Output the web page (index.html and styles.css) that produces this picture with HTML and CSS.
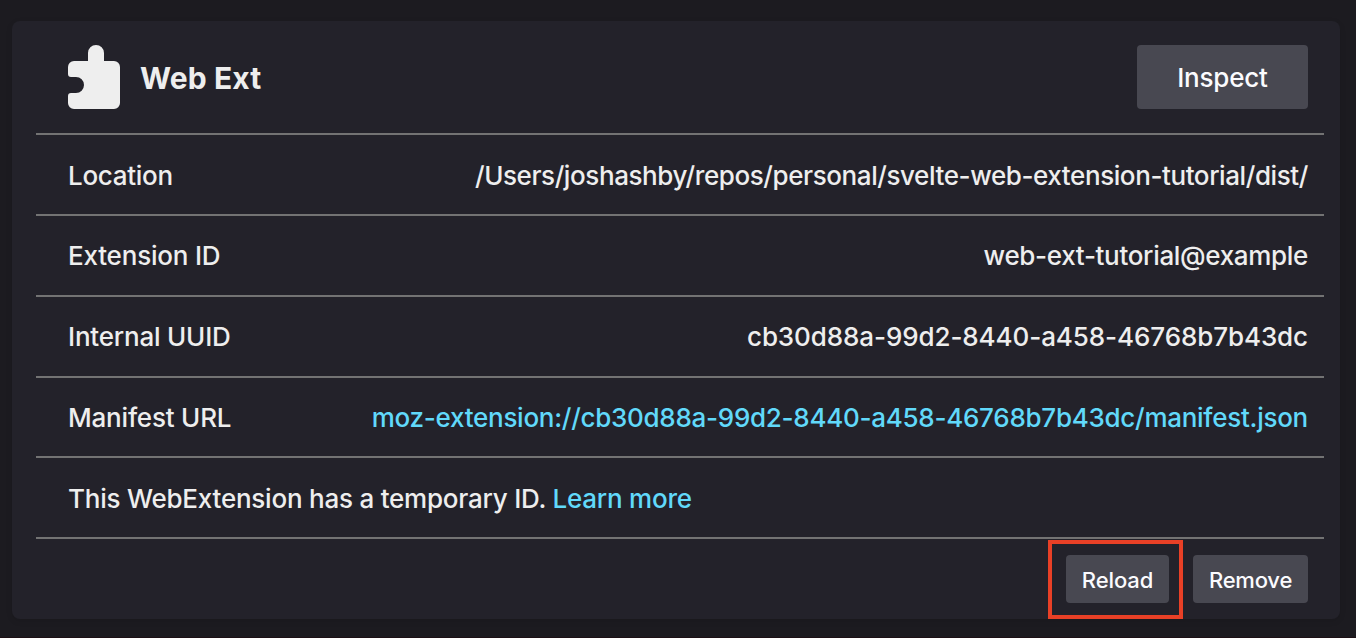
FILE: index.html
```html
<!DOCTYPE html>
<html lang="en">
<head>
<meta charset="utf-8">
<title>Web Ext</title>
<link rel="stylesheet" href="styles.css">
</head>
<body>
<article class="card">
  <header class="card-header">
    <svg class="icon" viewBox="0 0 52 64" width="52" height="64"><path fill="#eeeeee" d="M6 16H20V8a8 8 0 0 1 16 0v8H46a6 6 0 0 1 6 6V58a6 6 0 0 1-6 6H6a6 6 0 0 1-6-6V51a3 3 0 0 1 3-3H8a8 8 0 0 0 0-16H3a3 3 0 0 1-3-3V22a6 6 0 0 1 6-6Z"/></svg>
    <h1 class="title">Web Ext</h1>
    <button class="btn btn-large">Inspect</button>
  </header>
  <dl class="rows">
    <div class="row row-location"><dt>Location</dt><dd class="path">/Users/joshashby/repos/personal/svelte-web-extension-tutorial/dist/</dd></div>
    <div class="row"><dt>Extension ID</dt><dd class="extension-id">web-ext-tutorial@example</dd></div>
    <div class="row"><dt>Internal UUID</dt><dd class="uuid">cb30d88a-99d2-8440-a458-46768b7b43dc</dd></div>
    <div class="row row-manifest"><dt>Manifest URL</dt><dd class="manifest"><a class="link">moz-extension://cb30d88a-99d2-8440-a458-46768b7b43dc/manifest.json</a></dd></div>
  </dl>
  <p class="row note"><span>This WebExtension has a temporary ID. <a class="link">Learn more</a></span></p>
  <footer class="actions">
    <div class="highlight"><button class="btn btn-reload">Reload</button></div>
    <button class="btn btn-remove">Remove</button>
  </footer>
</article>
</body>
</html>
```
FILE: styles.css
```css
* { box-sizing: border-box; }
body { margin: 0; height: 638px; overflow: hidden; padding: 21px 16px 0 12px; border-bottom: 1px solid #1d1015; background: #1c1b20; color: #eeeeee; font: 450 26px/32px Inter, sans-serif; }
.card { height: 598px; padding: 0 16px 0 24px; background: #23222a; border-radius: 8px; box-shadow: 0 2px 6px rgba(12, 12, 13, 0.1); }
.card-header { display: flex; align-items: center; height: 114px; padding: 0 16px 0 32px; border-bottom: 2px solid #737373; }
.icon { flex: none; margin-right: 20px; }
.title { margin: 0; padding-top: 2px; font-size: 30px; font-weight: 700; line-height: 40px; letter-spacing: 0.1px; }
.btn { height: 48px; padding: 0; border: 0; border-radius: 4px; background: #484851; color: #fbfbfe; font: 500 22px/50px Inter, sans-serif; letter-spacing: -0.1px; white-space: nowrap; }
.btn-large { width: 171px; height: 64px; margin-left: auto; font-size: 26px; line-height: 66px; letter-spacing: -0.2px; }
.btn-reload { display: block; width: 103px; }
.btn-remove { width: 115px; letter-spacing: -0.2px; }
.rows { margin: 0; }
.row { display: flex; justify-content: space-between; align-items: center; height: 81px; margin: 0; padding: 1px 16px 0 32px; border-bottom: 2px solid #737373; letter-spacing: -0.2px; white-space: nowrap; }
.row-location { padding-top: 3px; letter-spacing: -0.3px; }
.row-manifest { height: 80px; }
.note { padding-top: 3px; letter-spacing: -0.23px; }
dd { margin: 0; }
.path { letter-spacing: -0.41px; }
.extension-id { letter-spacing: -0.32px; }
.uuid { letter-spacing: -0.09px; }
.manifest { letter-spacing: -0.27px; }
.link { color: #61d9fa; }
.actions { display: flex; justify-content: flex-end; gap: 10px; padding: 1px 16px 0 0; }
.highlight { width: 135px; height: 79px; border: 4px solid #e94026; padding: 11px 10px 0 14px; }
.btn-remove { margin-top: 15px; }
```
